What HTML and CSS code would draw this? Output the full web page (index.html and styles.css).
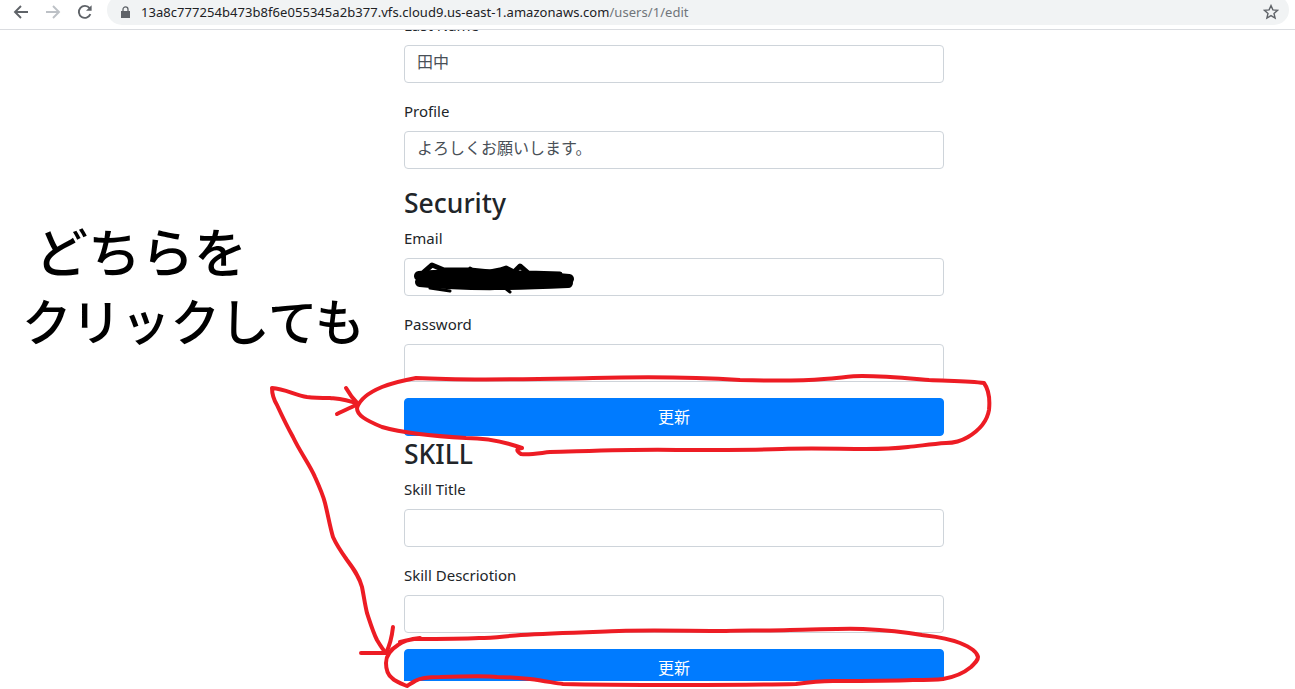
FILE: index.html
```html
<!DOCTYPE html>
<html lang="ja">
<head>
<meta charset="utf-8">
<title>Edit user</title>
<link rel="stylesheet" href="styles.css">
</head>
<body>
<header class="toolbar">
  <svg class="nav-icon" viewBox="0 0 16 16"><path class="ico-dark" d="M15 8H2.5M8 2 2 8l6 6"/></svg>
  <svg class="nav-icon" viewBox="0 0 16 16"><path class="ico-light" d="M1 8h12.5M8 2l6 6-6 6"/></svg>
  <svg class="nav-icon" viewBox="0 0 16 16"><path class="ico-dark" d="M13.4 10.2A6 6 0 1 1 12.6 4.2"/><path class="ico-fill" d="M14.6 1.2v5.6H9z"/></svg>
  <div class="omnibox">
    <svg class="lock" viewBox="0 0 9 12"><path class="ico-fill" d="M0 5h9v7H0z"/><path class="lock-arc" d="M2 5.5V3.4a2.5 2.5 0 0 1 5 0v2.1"/></svg>
    <span class="url">13a8c777254b473b8f6e055345a2b377.vfs.cloud9.us-east-1.amazonaws.com<span class="url-path">/users/1/edit</span></span>
    <svg class="star" viewBox="0 0 16 16"><path d="M8 1.6l1.9 4.3 4.7.4-3.6 3.1 1.1 4.6L8 11.6 3.9 14l1.1-4.6-3.6-3.1 4.7-.4z"/></svg>
  </div>
</header>

<main class="viewport">
  <form class="form">
    <div class="group"><label class="label-top">Last Name</label><input class="control" value="田中"></div>
    <div class="group"><label>Profile</label><input class="control" value="よろしくお願いします。"></div>
    <h3>Security</h3>
    <div class="group"><label>Email</label><input class="control"></div>
    <div class="group"><label>Password</label><input class="control"></div>
    <button class="submit" type="button">更新</button>
    <h3>SKILL</h3>
    <div class="group"><label>Skill Title</label><input class="control"></div>
    <div class="group"><label>Skill Descriotion</label><input class="control"></div>
    <button class="submit" type="button">更新</button>
  </form>
</main>

<div class="note note-one">どちらを</div>
<div class="note note-two">クリックしても</div>

<svg class="ink" viewBox="0 0 1295 689">
  <g class="scribble">
    <path d="M419 276C450 273 520 274 569 279"/>
    <path d="M420 282C470 287 520 285 568 283"/>
    <path class="mid" d="M422 280C470 280 520 280 560 280"/>
    <path class="thin" d="M424 272L432 265L444 270L470 270L490 272L500 270L506 268L514 272L520 266L528 273L560 274"/>
    <path class="fine" d="M430 288L450 291M505 288L510 292M470 268L476 272"/>
  </g>
  <g class="red">
    <path d="M521 454C515 450 517 449 522 448C500 440 480 438 466 438C430 436 400 432 382 427C365 420 357 415 357 408C360 398 370 392 382 387C395 382 405 380 416 378C470 381 540 379 593 378C630 377 680 376 740 380C780 381 800 381 824 379C840 378 850 376 862 376C885 376 905 378 929 380C950 381 970 381 984 383C989 390 990 400 989 410C987 422 978 431 968 437C958 443 950 443 946 443C930 444 920 446 908 447C890 449 880 449 866 449C840 449 810 448 782 449C750 450 710 450 677 450C640 449 590 451 550 452C540 453 530 455 521 454Z"/>
    <path d="M358 404C345 399 340 399 330 398C320 398 315 398 307 397C295 395 285 389 272 388C272 395 274 400 277 405C283 418 288 428 293 437C300 452 310 465 315 477C320 488 323 495 325 503C328 515 330 527 333 537C337 546 342 553 347 560C353 568 359 576 362 587C364 597 365 605 367 613C370 622 373 632 377 640C380 645 383 650 386 653"/>
    <path d="M346 388C350 395 353 399 358 404C352 407 345 410 337 414"/>
    <path d="M393 627C392 636 390 645 386 653C378 653 370 653 361 653"/>
    <path d="M420 638C410 639 403 641 398 645C390 650 386 655 386 663C386 670 388 675 392 678C396 682 402 684 407 686C410 684 412 683 415 681C420 678 430 677 440 677C470 676 490 676 497 677C510 677 520 678 530 679C545 681 555 683 563 684C600 685 640 685 680 685C720 685 760 685 796 684C810 682 820 681 833 681C860 681 890 681 913 680C925 680 935 680 943 679C955 677 965 672 971 667C976 662 978 660 978 657C977 652 970 647 960 643C945 637 930 636 922 635C905 632 885 630 863 629C840 628 815 630 790 630C760 631 740 630 726 631C690 631 650 630 619 631C590 632 550 633 521 635C505 636 495 638 479 638C460 639 435 639 414 639C408 640 405 641 400 642"/>
  </g>
</svg>
</body>
</html>
```

FILE: styles.css
```css
* { box-sizing: border-box; }

html, body {
  margin: 0;
  height: 100%;
  overflow: hidden;
  background: #fff;
}

body {
  position: relative;
  color: #212529;
  font-family: "Noto Sans", "Noto Sans CJK JP", sans-serif;
  font-size: 15px;
}

.toolbar {
  position: relative;
  z-index: 1;
  display: flex;
  align-items: flex-start;
  height: 30px;
  padding-left: 13px;
  border-bottom: 1px solid #dadce0;
  background: #fff;
  overflow: hidden;
}

.nav-icon {
  flex: none;
  width: 16px;
  height: 16px;
  margin: 4px 16px 0 0;
}

.nav-icon path { fill: none; stroke-width: 1.9; }
.nav-icon .ico-fill { fill: #5f6368; stroke: none; }
.ico-dark { stroke: #5f6368; }
.ico-light { stroke: #bdc1c6; }
.ico-fill { fill: #5f6368; }

.omnibox {
  display: flex;
  align-items: center;
  flex: none;
  width: 1182px;
  height: 30px;
  margin: -5px 0 0 -2px;
  padding: 3px 10px 0 14px;
  border-radius: 15px;
  background: #f1f3f4;
}

.lock { flex: none; width: 9px; height: 12px; }
.lock-arc { fill: none; stroke: #5f6368; stroke-width: 1.3; }

.url {
  flex: 1;
  margin-left: 11px;
  color: #202124;
  font-size: 13px;
  letter-spacing: 0.05px;
  white-space: nowrap;
}

.url-path { color: #70757a; }

.star { flex: none; width: 16px; height: 16px; }
.star path { fill: none; stroke: #5f6368; stroke-width: 1.4; }

.viewport {
  height: 651px;
  padding-left: 404px;
  overflow: hidden;
}

.form {
  width: 540px;
  margin-top: -17px;
}

.group { margin-bottom: 16px; }

label {
  display: block;
  height: 24px;
  margin-bottom: 8px;
  line-height: 24px;
}

.label-top { line-height: 24px; }

.control {
  display: block;
  width: 100%;
  height: 38px;
  padding: 2px 12px 8px;
  border: 1px solid #ced4da;
  border-radius: 4px;
  background: #fff;
  color: #495057;
  font: inherit;
  font-size: 16px;
}

h3 {
  height: 33px;
  margin: 0 0 8px;
  font-size: 26.5px;
  font-weight: 500;
  line-height: 36px;
}

.submit {
  display: block;
  width: 100%;
  height: 38px;
  padding: 0 0 3px;
  border: 1px solid #007bff;
  border-radius: 4px;
  background: #007bff;
  color: #fff;
  font: inherit;
  font-size: 16px;
}

.note {
  position: absolute;
  color: #000;
  font-family: "Noto Sans CJK JP", sans-serif;
  font-weight: 500;
  line-height: 1;
  white-space: nowrap;
}

.note-one { left: 35px; top: 224px; font-size: 53px; }
.note-two { left: 22px; top: 295px; font-size: 49.5px; }

.ink {
  position: absolute;
  left: 0;
  top: 0;
  width: 1295px;
  height: 689px;
  pointer-events: none;
}

.ink path { fill: none; stroke-linecap: round; stroke-linejoin: round; }
.red path { stroke: #ed1c24; stroke-width: 4; }
.scribble path { stroke: #000; stroke-width: 10; }
.scribble .mid { stroke-width: 6; }
.scribble .thin { stroke-width: 5; }
.scribble .fine { stroke-width: 3; }
```
